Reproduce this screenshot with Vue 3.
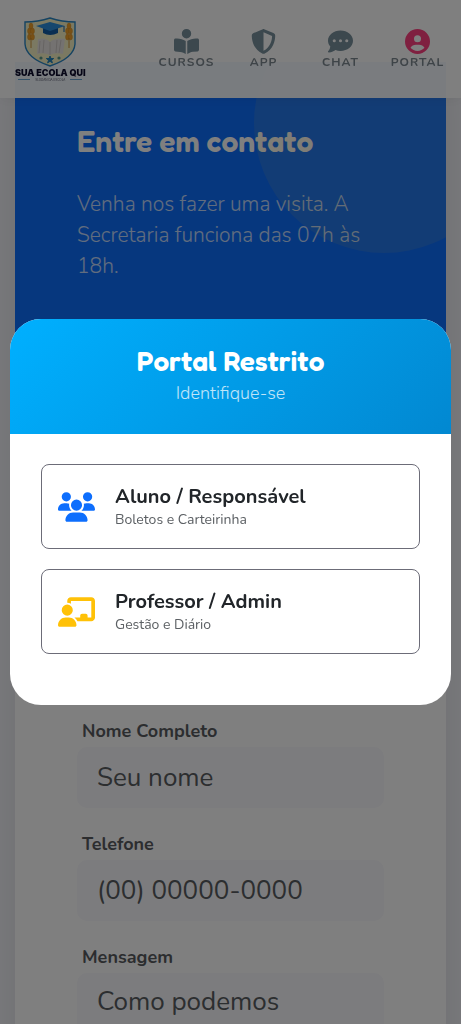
<script setup>
const links = [
  {
    label: 'Cursos',
    box: '0 0 512 512',
    path: 'M160 96a96 96 0 1 1 192 0A96 96 0 1 1 160 96zm80 152V512l-48.4-24.2c-20.9-10.4-43.5-17-66.8-19.3l-96-9.6C12.5 457.2 0 443.5 0 427V224c0-17.7 14.3-32 32-32H62.3c63.6 0 125.6 19.6 177.7 56zm32 264V248c52.1-36.4 114.1-56 177.7-56H480c17.7 0 32 14.3 32 32V427c0 16.4-12.5 30.2-28.8 31.8l-96 9.6c-23.2 2.3-45.9 8.9-66.8 19.3L272 512z',
  },
  {
    label: 'App',
    box: '0 0 512 512',
    path: 'M256 0c4.6 0 9.2 1 13.4 2.9L457.7 82.8c22 9.3 38.4 31 38.3 57.2c-.5 99.2-41.3 280.7-213.6 363.2c-16.7 8-36.1 8-52.8 0C57.3 420.7 16.5 239.2 16 140c-.1-26.2 16.3-47.9 38.3-57.2L242.7 2.9C246.8 1 251.4 0 256 0zm0 66.8V444.8C394 378 431.1 230.1 432 141.4L256 66.8z',
  },
  {
    label: 'Chat',
    box: '0 0 512 512',
    path: 'M256 448c141.4 0 256-93.1 256-208S397.4 32 256 32S0 125.1 0 240c0 45.1 17.7 86.8 47.7 120.9c-1.9 24.5-11.4 46.3-21.4 62.9c-5.5 9.2-11.1 16.6-15.2 21.6c-2.1 2.5-3.7 4.4-4.9 5.7l-1.6 1.7c-4.6 4.6-5.9 11.4-3.4 17.4c2.5 6 8.3 9.9 14.8 9.9c28.7 0 57.6-8.9 81.6-19.3c22.9-10 42.4-21.9 54.3-30.6c31.8 11.5 67 17.9 104.1 17.9zM128 208a32 32 0 1 1 0 64 32 32 0 1 1 0-64zm128 0a32 32 0 1 1 0 64 32 32 0 1 1 0-64zm96 32a32 32 0 1 1 64 0 32 32 0 1 1 -64 0z',
  },
  {
    label: 'Portal',
    active: true,
    box: '0 0 512 512',
    path: 'M399 384.2C376.9 345.8 335.4 320 288 320H224c-47.4 0-88.9 25.8-111 64.2c35.2 39.2 86.2 63.8 143 63.8s107.8-24.7 143-63.8zM0 256a256 256 0 1 1 512 0A256 256 0 1 1 0 256zm256 16a72 72 0 1 0 0-144 72 72 0 1 0 0 144z',
  },
]

const profiles = [
  {
    title: 'Aluno / Responsável',
    text: 'Boletos e Carteirinha',
    tone: 'blue',
    path: 'M144 0a80 80 0 1 1 0 160A80 80 0 1 1 144 0zM512 0a80 80 0 1 1 0 160A80 80 0 1 1 512 0zM0 298.7C0 239.8 47.8 192 106.7 192h42.7c15.9 0 31 3.5 44.6 9.7c-1.3 7.2-1.9 14.7-1.9 22.3c0 38.2 16.8 72.5 43.3 96H21.3C9.6 320 0 310.4 0 298.7zM405.3 320c26.6-23.5 43.3-57.8 43.3-96c0-7.6-.7-15-1.9-22.3c13.6-6.3 28.7-9.7 44.6-9.7h42.7C592.2 192 640 239.8 640 298.7c0 11.8-9.6 21.3-21.3 21.3H405.3zM224 224a96 96 0 1 1 192 0 96 96 0 1 1 -192 0zM128 485.3C128 411.7 187.7 352 261.3 352H378.7C452.3 352 512 411.7 512 485.3c0 14.7-11.9 26.7-26.7 26.7H154.7c-14.7 0-26.7-11.9-26.7-26.7z',
  },
  {
    title: 'Professor / Admin',
    text: 'Gestão e Diário',
    tone: 'yellow',
    path: 'M160 64c0-35.3 28.7-64 64-64H576c35.3 0 64 28.7 64 64V352c0 35.3-28.7 64-64 64H336.8c-11.8-25.5-29.9-47.5-52.4-64H384V320c0-17.7 14.3-32 32-32h64c17.7 0 32 14.3 32 32v32h64V64L224 64v49.1C205.2 102.2 183.3 96 160 96V64zm0 64a96 96 0 1 1 0 192 96 96 0 1 1 0-192zM133.3 352h53.3C260.3 352 320 411.7 320 485.3c0 14.7-11.9 26.7-26.7 26.7H26.7C11.9 512 0 500.1 0 485.3C0 411.7 59.7 352 133.3 352z',
  },
]
</script>

<template>
  <div class="page">
    <header class="navbar">
      <a class="brand" href="#">
        <svg class="crest" viewBox="0 0 54 50" aria-hidden="true">
          <path d="M2 5Q15 5 27 1Q39 5 52 5V27Q51 41 27 49Q3 41 2 27Z" fill="#f6f3c4" stroke="#2b86c5" stroke-width="1.4" />
          <path d="M15 22Q23 20 27 25Q32 20 42 22L40 37Q32 35 27 38Q21 35 14 37Z" fill="#e9e5e2" />
          <path d="M27 25V38M17 24L16 36M21 23L20 36M34 23L33 36M38 23L36 36" fill="none" stroke="#bbb4b2" stroke-width=".6" />
          <path d="M20 11V16Q27 20 35 16V11Z" fill="#125da5" />
          <path d="M13 9L27 5L42 9L27 14Z" fill="#2d8fdc" />
          <path d="M41 9V15" stroke="#125da5" stroke-width="1" />
          <g fill="#f0a12b" stroke="#c97a14" stroke-width=".3">
            <ellipse cx="8" cy="9" rx="2" ry="3" /><ellipse cx="6.500" cy="14" rx="2" ry="3" /><ellipse cx="9.500" cy="14" rx="2" ry="3" />
            <ellipse cx="6.500" cy="20" rx="2" ry="3" /><ellipse cx="9.500" cy="20" rx="2" ry="3" />
            <ellipse cx="46" cy="9" rx="2" ry="3" /><ellipse cx="44.500" cy="14" rx="2" ry="3" /><ellipse cx="47.500" cy="14" rx="2" ry="3" />
            <ellipse cx="44.500" cy="20" rx="2" ry="3" /><ellipse cx="47.500" cy="20" rx="2" ry="3" />
          </g>
          <path d="M8 21V31M46 21V31" stroke="#c98a2c" stroke-width=".9" />
          <path d="M27 39l1 2.500h2.700l-2.200 1.700.9 2.700L27 44.300l-2.400 1.600.9-2.700-2.200-1.700H26Z" fill="#2484bd" stroke="#2484bd" />
          <circle cx="18" cy="41" r="1.600" fill="#5b9a8c" /><circle cx="36" cy="41" r="1.600" fill="#5b9a8c" />
        </svg>
        <span class="brand-name">SUA ECOLA QUI</span>
        <span class="brand-rule"><i></i><small>SLOGAN DA ESCOLA</small><i></i></span>
      </a>
      <nav class="menu">
        <a v-for="l in links" :key="l.label" href="#" class="menu-link" :class="{ active: l.active }">
          <svg :viewBox="l.box" aria-hidden="true"><path :d="l.path" /></svg>
          <span>{{ l.label }}</span>
        </a>
      </nav>
    </header>

    <main class="contact">
      <section class="intro">
        <h2>Entre em contato</h2>
        <p>Venha nos fazer uma visita. A Secretaria funciona das 07h às 18h.</p>
      </section>
      <form class="form">
        <div class="field">
          <label for="name">Nome Completo</label>
          <input id="name" type="text" placeholder="Seu nome">
        </div>
        <div class="field">
          <label for="phone">Telefone</label>
          <input id="phone" type="tel" placeholder="(00) 00000-0000">
        </div>
        <div class="field">
          <label for="message">Mensagem</label>
          <textarea id="message" rows="3" placeholder="Como podemos"></textarea>
        </div>
      </form>
    </main>

    <div class="backdrop">
      <div class="modal" role="dialog" aria-modal="true" aria-labelledby="portal-title">
        <div class="modal-head">
          <h3 id="portal-title">Portal Restrito</h3>
          <p>Identifique-se</p>
        </div>
        <div class="modal-body">
          <button v-for="p in profiles" :key="p.title" type="button" class="profile">
            <svg :class="p.tone" viewBox="0 0 640 512" aria-hidden="true"><path :d="p.path" /></svg>
            <span class="profile-text">
              <strong>{{ p.title }}</strong>
              <small>{{ p.text }}</small>
            </span>
          </button>
        </div>
      </div>
    </div>
  </div>
</template>

<style>
body {
  margin: 0;
  overflow: hidden;
}
</style>

<style scoped>
* {
  box-sizing: border-box;
}
.page {
  height: 100vh;
  overflow: hidden;
  padding: 62px 15px 0;
  background: #f4f5fa;
  color: #212529;
  font-family: Nunito, Lato, "Noto Sans", sans-serif;
}
.navbar {
  position: fixed;
  inset: 0 0 auto;
  z-index: 2;
  height: 98px;
  display: flex;
  align-items: center;
  justify-content: space-between;
  padding: 0 5px 0 15px;
  background: rgba(255, 255, 255, 0.95);
  box-shadow: 0 2px 12px rgba(0, 0, 0, 0.05);
}
.brand {
  display: flex;
  flex-direction: column;
  align-items: center;
  text-decoration: none;
  color: #0c0c2c;
}
.crest {
  width: 54px;
  height: 50px;
}
.brand-name {
  font: 900 9px/11px Inter, sans-serif;
  white-space: nowrap;
}
.brand-rule {
  display: flex;
  align-items: center;
  gap: 5px;
  height: 4px;
  color: #55586a;
}
.brand-rule i {
  width: 12px;
  height: 1px;
  background: #6aa5d0;
}
.brand-rule small {
  font: 400 3px/4px Inter, sans-serif;
}
.menu {
  display: flex;
}
.menu-link {
  width: 77px;
  display: flex;
  flex-direction: column;
  align-items: center;
  gap: 1px;
  color: #78909c;
  text-decoration: none;
  text-transform: uppercase;
  font-size: 12px;
  line-height: 14px;
  font-weight: 700;
  letter-spacing: 1px;
}
.menu-link svg {
  width: 25px;
  height: 25px;
  fill: currentColor;
}
.menu-link span {
  color: #7d8890;
}
.menu-link.active svg {
  fill: #ff4081;
}
.contact {
  background: #fff;
  box-shadow: 0 10px 40px rgba(0, 0, 0, 0.1);
}
.intro {
  position: relative;
  overflow: hidden;
  min-height: 594px;
  padding: 61px 62px;
  background: #0d6efd;
  color: #fff;
}
.intro::after {
  content: "";
  position: absolute;
  top: -69px;
  right: -68px;
  width: 260px;
  height: 260px;
  border-radius: 50%;
  background: rgba(255, 213, 79, 0.1);
}
.intro h2 {
  margin: 0 0 29px;
  font: 600 30px/37px Fredoka, Inter, sans-serif;
}
.intro p {
  margin: 0;
  font-size: 21px;
  line-height: 31px;
  font-weight: 300;
  opacity: 0.75;
}
.form {
  padding: 62px;
  display: grid;
  gap: 23px;
}
.field {
  display: grid;
  gap: 2px;
}
.field label {
  padding-left: 5px;
  font-size: 18px;
  line-height: 27px;
  font-weight: 700;
  color: #585b5f;
}
.field input,
.field textarea {
  display: block;
  width: 100%;
  border: 0;
  border-radius: 10px;
  padding: 11px 20px;
  background: #f8f8fc;
  color: #212529;
  font: 400 26px/36px Nunito, Lato, "Noto Sans", sans-serif;
  resize: none;
}
.field input {
  height: 61px;
}
.field ::placeholder {
  color: #595c60;
  opacity: 1;
}
.backdrop {
  position: fixed;
  inset: 0;
  z-index: 3;
  display: flex;
  align-items: center;
  padding: 10px;
  background: rgba(0, 0, 0, 0.5);
}
.modal {
  flex: 1;
  overflow: hidden;
  border-radius: 31px;
  background: #fff;
}
.modal-head {
  padding: 25px;
  text-align: center;
  color: #fff;
  background: linear-gradient(135deg, #00b0ff, #0288d1);
}
.modal-head h3 {
  margin: 0;
  font: 600 28px/34px Fredoka, Inter, sans-serif;
}
.modal-head p {
  margin: 0;
  font-size: 18px;
  line-height: 31px;
  font-weight: 300;
  opacity: 0.75;
}
.modal-body {
  display: grid;
  gap: 20px;
  padding: 30px 31px 51px;
}
.profile {
  display: flex;
  align-items: center;
  gap: 20px;
  padding: 19px 16px;
  border: 1px solid #6c6c78;
  border-radius: 8px;
  background: #fff;
  color: #212529;
  font-family: inherit;
  text-align: left;
}
.profile svg {
  width: 37px;
  height: 30px;
}
.blue {
  fill: #0d6efd;
}
.yellow {
  fill: #ffc107;
}
.profile-text {
  display: grid;
}
.profile strong {
  font-size: 20px;
  line-height: 26px;
  font-weight: 700;
}
.profile small {
  font-size: 14px;
  line-height: 19px;
  color: #5c6064;
}
</style>
